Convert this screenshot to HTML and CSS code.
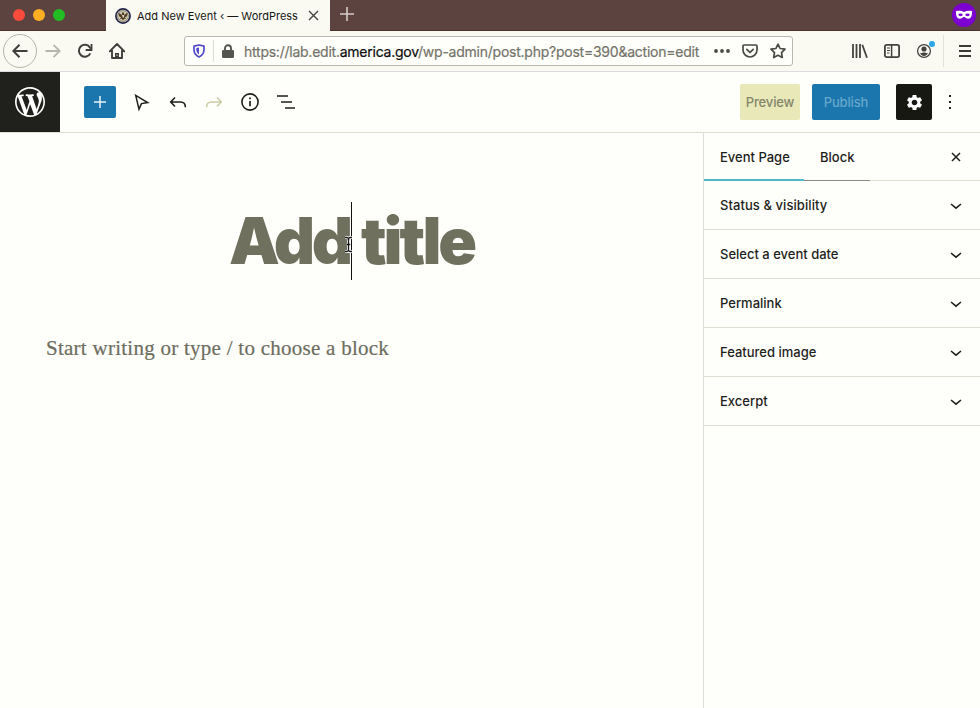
FILE: index.html
```html
<!DOCTYPE html>
<html lang="en">
<head>
<meta charset="utf-8">
<title>Add New Event ‹ — WordPress</title>
<link rel="stylesheet" href="styles.css">
</head>
<body>
<div class="tabbar">
  <div class="lights"><i class="red"></i><i class="amber"></i><i class="green"></i></div>
  <div class="tab">
    <svg width="16" height="16" viewBox="0 0 16 16"><circle cx="8" cy="8" r="7.1" fill="#e9e4cf" stroke="#23254a" stroke-width="1.7"/><circle cx="8" cy="8" r="5.4" fill="#d3cdb0" stroke="#55513f" stroke-width=".6"/><path d="M3.3 4.8 5.6 6l1.3 1.2V4.6h2.2v2.6L10.400 6l2.300-1.200-.8 3.400-2 1.300 1.300 1.700-2-.4L8 12.400 6.800 10.800l-2 .4 1.300-1.700-2-1.300z" fill="#4d3a26"/><path d="M6.900 7h2.200v2L8 10z" fill="#e4d6b4"/></svg>
    <span class="tab-title">Add New Event ‹ — WordPress</span>
    <svg class="tab-close" width="11" height="11" viewBox="0 0 11 11"><path d="M1 1l9 9M10 1l-9 9" stroke="#44443f" stroke-width="1.4"/></svg>
  </div>
  <svg class="tab-new" width="14" height="14" viewBox="0 0 14 14"><path d="M7 0v14M0 7h14" stroke="#d5ccc9" stroke-width="1.6"/></svg>
  <svg class="private" width="24" height="24" viewBox="0 0 24 24"><circle cx="12" cy="12" r="12" fill="#7c00d0"/><path d="M4 8.300c2.500-.9 5.600-.4 8 .7 2.400-1.100 5.500-1.600 8-.7.3 3.400-.6 7.400-3.700 7.400-2 0-2.800-1.800-4.300-1.800s-2.300 1.800-4.300 1.800C4.600 15.700 3.700 11.700 4 8.300z" fill="#fff"/><ellipse cx="8.500" cy="11.800" rx="2.200" ry="1.400" fill="#7c00d0"/><ellipse cx="15.500" cy="11.800" rx="2.200" ry="1.400" fill="#7c00d0"/></svg>
</div>

<div class="navbar">
  <div class="back"><svg width="16" height="14" viewBox="0 0 16 14"><path d="M15.500 7H1.500M7.500.8 1.300 7l6.200 6.200" fill="none" stroke="#3f3f3b" stroke-width="2"/></svg></div>
  <svg class="fwd" width="16" height="14" viewBox="0 0 16 14"><path d="M.5 7h14M8.500.8 14.700 7l-6.200 6.200" fill="none" stroke="#b5b5ac" stroke-width="1.8"/></svg>
  <svg class="reload" width="16" height="16" viewBox="0 0 16 16"><path d="M13.300 10.400A6 6 0 1 1 12.800 4.300L14 5.700" fill="none" stroke="#3f3f3b" stroke-width="2"/><path d="M14.500 1v6H8.700" fill="none" stroke="#3f3f3b" stroke-width="1.800"/></svg>
  <svg class="home" width="16" height="16" viewBox="0 0 16 16"><path d="M.7 8.300 8 1l7.300 7.300M3 7v8h10V7" fill="none" stroke="#3f3f3b" stroke-width="1.900" stroke-linejoin="round" stroke-linecap="round"/><path d="M6 15v-5h4v5z" fill="#3f3f3b"/><path d="M7.600 11.500h.8V13h-.8z" fill="#f9f9f7"/></svg>
  <div class="urlbar">
    <svg class="shield" width="12" height="14" viewBox="0 0 12 14"><path d="M6 1 11 2.200v3.600c0 3.200-1.900 5.800-5 7.200-3.100-1.400-5-4-5-7.200V2.200z" fill="none" stroke="#5148cc" stroke-width="1.700" stroke-linejoin="round"/><path d="M6 3.500v7C4.200 9.300 3.300 7.900 3.300 5.600V4.100z" fill="#5148cc"/></svg>
    <i class="url-sep"></i>
    <svg class="lock" width="12" height="14" viewBox="0 0 12 14"><path d="M3 6.500V4.200a3 3 0 0 1 6 0v2.300" fill="none" stroke="#55554f" stroke-width="1.900"/><rect y="6" width="12" height="8" rx="1.200" fill="#55554f"/></svg>
    <span class="url">https://lab.edit.<b>america.gov</b>/wp-admin/post.php?post=390&amp;action=edit</span>
    <svg class="dots" width="16" height="4" viewBox="0 0 16 4"><g fill="#4a4a45"><circle cx="2" cy="2" r="1.900"/><circle cx="8" cy="2" r="1.900"/><circle cx="14" cy="2" r="1.900"/></g></svg>
    <svg class="pocket" width="16" height="14" viewBox="0 0 16 14"><path d="M2 1h12a1 1 0 0 1 1 1v4a7 7 0 0 1-14 0V2a1 1 0 0 1 1-1z" fill="none" stroke="#4a4a45" stroke-width="1.700"/><path d="M4.800 5.300 8 8.400l3.200-3.100" fill="none" stroke="#4a4a45" stroke-width="1.700" stroke-linecap="round" stroke-linejoin="round"/></svg>
    <svg class="star" width="16" height="16" viewBox="0 0 16 16"><path d="M8 1.200l2.100 4.300 4.900.7-3.500 3.400.8 4.900L8 12.200l-4.300 2.300.8-4.900L1 6.200l4.900-.7z" fill="none" stroke="#4a4a45" stroke-width="1.700" stroke-linejoin="round"/></svg>
  </div>
  <svg class="library" width="16" height="14" viewBox="0 0 16 14"><path d="M1 0v14M4.500 0v14M8 0v14M10.300.7l4.700 13" stroke="#44443f" stroke-width="1.800" fill="none"/></svg>
  <svg class="side-ic" width="16" height="14" viewBox="0 0 16 14"><rect x=".9" y=".9" width="14.200" height="12.200" rx="1.800" fill="none" stroke="#44443f" stroke-width="1.800"/><path d="M7.600 1v12" stroke="#44443f" stroke-width="1.500"/><path d="M3 4h3M3 6.500h3M3 9h2.400" stroke="#44443f"/></svg>
  <svg class="account" width="20" height="20" viewBox="0 0 20 20"><circle cx="8" cy="11" r="6.400" fill="none" stroke="#44443f" stroke-width="1.300"/><circle cx="8" cy="9" r="2.600" fill="#44443f"/><path d="M3.900 12.800c1 .9 2.300-.2 4.100-.2s3.100 1.100 4.100.2c-.6 1.900-2.200 3.100-4.100 3.100s-3.500-1.200-4.100-3.100z" fill="#44443f"/><circle cx="16" cy="4" r="3" fill="#2ca5e6"/></svg>
  <i class="divider"></i>
  <svg class="menu" width="12" height="12" viewBox="0 0 12 12"><path d="M0 1h12M0 6h12M0 11h12" stroke="#3a3a36" stroke-width="1.800"/></svg>
</div>

<header class="editor-bar">
  <div class="wp"><svg width="36" height="36" viewBox="-2 -2 24 24"><path fill="#fff" d="M20 10c0-5.510-4.490-10-10-10C4.480 0 0 4.490 0 10c0 5.520 4.480 10 10 10 5.510 0 10-4.480 10-10zM7.780 15.370L4.370 6.220c.55-.02 1.170-.08 1.170-.08.5-.06.44-1.130-.06-1.110 0 0-1.450.11-2.370.11-.18 0-.37 0-.58-.01C4.120 2.690 6.870 1.110 10 1.110c2.330 0 4.450.87 6.050 2.340-.68-.11-1.650.39-1.650 1.580 0 .74.45 1.360.9 2.100.35.61.55 1.360.55 2.460 0 1.490-1.400 5-1.400 5l-3.030-8.370c.54-.02.82-.17.82-.17.5-.05.44-1.250-.06-1.220 0 0-1.440.12-2.380.12-.87 0-2.330-.12-2.330-.12-.5-.03-.56 1.200-.06 1.220l.92.08 1.260 3.410zM17.410 10c.24-.64.74-1.870.43-4.250.7 1.290 1.050 2.710 1.050 4.250 0 3.290-1.730 6.240-4.400 7.780.97-2.590 1.940-5.200 2.920-7.780zM6.100 18.090C3.120 16.650 1.110 13.530 1.110 10c0-1.300.23-2.480.72-3.590C3.250 10.300 4.670 14.200 6.100 18.090zm4.030-6.630l2.580 6.980c-.86.29-1.760.45-2.710.45-.79 0-1.570-.11-2.290-.33.81-2.380 1.620-4.740 2.420-7.100z"/></svg></div>
  <div class="tools">
    <div class="add"><svg width="12" height="12" viewBox="0 0 12 12"><path d="M6 0v12M0 6h12" stroke="#e9f3f8" stroke-width="1.500"/></svg></div>
    <svg width="24" height="24" viewBox="0 0 24 24"><path d="M5.700 5.300l12 7.200-6.200 1.100-2.500 5.500z" fill="none" stroke="#1e1e1c" stroke-width="1.500"/></svg>
    <svg width="24" height="24" viewBox="0 0 24 24"><path d="M9 7.500 4.700 12 9 16.500M5 12h9.500c3.200 0 4.900 1.700 4.900 5.200" fill="none" stroke="#1e1e1c" stroke-width="1.600"/></svg>
    <svg width="24" height="24" viewBox="0 0 24 24"><path d="M15 7.500l4.300 4.500-4.300 4.500M19 12H9.500c-3.200 0-4.900 1.700-4.900 5.200" fill="none" stroke="#cccca5" stroke-width="1.500"/></svg>
    <svg width="24" height="24" viewBox="0 0 24 24"><circle cx="12" cy="12" r="8.100" fill="none" stroke="#1e1e1c" stroke-width="1.600"/><path d="M12 11v5.200M12 7.600v1.700" stroke="#1e1e1c" stroke-width="1.700"/></svg>
    <svg width="24" height="24" viewBox="0 0 24 24"><path d="M3 6h11M7 12h11M11 18h10" stroke="#1e1e1c" stroke-width="1.500"/></svg>
  </div>
  <div class="actions">
    <div class="btn preview"><span>Preview</span></div>
    <div class="btn publish"><span>Publish</span></div>
    <div class="gear"><svg width="19" height="19" viewBox="0 0 24 24"><path fill="#fff" d="M19.140 12.940c.04-.3.06-.61.06-.94 0-.32-.02-.64-.07-.94l2.030-1.580c.18-.14.23-.41.12-.61l-1.920-3.320c-.12-.22-.37-.29-.59-.22l-2.390.96c-.5-.38-1.030-.7-1.620-.94L14.400 2.810c-.04-.24-.24-.41-.48-.41h-3.840c-.24 0-.43.17-.47.41L9.250 5.350C8.660 5.590 8.120 5.920 7.630 6.290L5.240 5.330c-.22-.08-.47 0-.59.22L2.740 8.870C2.620 9.080 2.660 9.340 2.860 9.480l2.030 1.580C4.840 11.360 4.800 11.690 4.800 12s.02.64.07.94l-2.030 1.580c-.18.14-.23.41-.12.61l1.920 3.320c.12.22.37.29.59.22l2.390-.96c.5.38 1.030.7 1.620.94l.36 2.540c.05.24.24.41.48.41h3.840c.24 0 .44-.17.47-.41l.36-2.540c.59-.24 1.130-.56 1.620-.94l2.390.96c.22.08.47 0 .59-.22l1.920-3.320c.12-.22.07-.47-.12-.61L19.140 12.940zM12 15.600c-1.980 0-3.600-1.620-3.600-3.600s1.620-3.600 3.600-3.600 3.600 1.620 3.600 3.600S13.980 15.600 12 15.600z"/></svg></div>
    <svg class="kebab" width="4" height="16" viewBox="0 0 4 16"><path d="M1 1h2v2H1zM1 7h2v2H1zM1 13h2v2H1z" fill="#1e1e1c"/></svg>
  </div>
</header>

<div class="workspace">
  <main class="canvas">
    <h1 class="title"><span class="word-add">Add</span><span class="word-title">title</span><i class="caret"></i>
      <svg class="ibeam" width="9" height="17" viewBox="0 0 9 17"><path d="M1 1.500h2l1.500 1 1.500-1h2M4.500 2.500v12M1 15.500h2l1.500-1 1.500 1h2M2.800 8.500h3.400" fill="none" stroke="#fff" stroke-width="3"/><path d="M1 1.500h2l1.500 1 1.500-1h2M4.500 2.500v12M1 15.500h2l1.500-1 1.500 1h2M2.800 8.500h3.400" fill="none" stroke="#111" stroke-width="1.300"/></svg>
    </h1>
    <p class="prompt">Start writing or type / to choose a block</p>
  </main>
  <aside class="sidebar">
    <div class="side-tabs">
      <div class="stab active"><span>Event Page</span></div>
      <div class="stab block"><span>Block</span></div>
      <svg class="x" width="10" height="10" viewBox="0 0 10 10"><path d="M1 1l8 8M9 1l-8 8" stroke="#1e1e1c" stroke-width="1.500"/></svg>
    </div>
    <div class="panel"><span class="p1">Status &amp; visibility</span><svg width="12" height="7" viewBox="0 0 12 7"><path d="M1 1l5 4.200L11 1" fill="none" stroke="#1e1e1c" stroke-width="1.600"/></svg></div>
    <div class="panel"><span>Select a event date</span><svg width="12" height="7" viewBox="0 0 12 7"><path d="M1 1l5 4.200L11 1" fill="none" stroke="#1e1e1c" stroke-width="1.600"/></svg></div>
    <div class="panel"><span>Permalink</span><svg width="12" height="7" viewBox="0 0 12 7"><path d="M1 1l5 4.200L11 1" fill="none" stroke="#1e1e1c" stroke-width="1.600"/></svg></div>
    <div class="panel"><span>Featured image</span><svg width="12" height="7" viewBox="0 0 12 7"><path d="M1 1l5 4.200L11 1" fill="none" stroke="#1e1e1c" stroke-width="1.600"/></svg></div>
    <div class="panel"><span>Excerpt</span><svg width="12" height="7" viewBox="0 0 12 7"><path d="M1 1l5 4.200L11 1" fill="none" stroke="#1e1e1c" stroke-width="1.600"/></svg></div>
  </aside>
</div>
</body>
</html>
```
FILE: styles.css
```css
* { box-sizing: border-box; }
body { margin: 0; width: 980px; height: 708px; overflow: hidden; display: flex; flex-direction: column; background: #fefefa; color: #1e1e1c; font-family: Inter, "Liberation Sans", sans-serif; }
svg { display: block; flex: none; }
span { white-space: nowrap; }

.tabbar { height: 31px; flex: none; display: flex; align-items: center; background: #5d4340; border-bottom: 1px solid #4a302a; }
.lights { width: 106px; padding-left: 13px; display: flex; gap: 8px; }
.lights i { width: 12px; height: 12px; border-radius: 50%; }
.red { background: #fb4b3c; }
.amber { background: #fdaf24; }
.green { background: #22bd22; }
.tab { width: 224px; height: 31px; align-self: flex-start; padding-left: 9px; display: flex; align-items: center; background: #fafaf3; }
.tab-title { width: 161px; margin-left: 6px; font-size: 11px; letter-spacing: 0; color: #161614; }
.tab-close { margin-left: 10px; }
.tab-new { margin-left: 10px; margin-top: -2px; }
.private { margin-left: auto; margin-right: 4px; }

.navbar { height: 41px; flex: none; display: flex; align-items: center; background: #fafaf3; border-bottom: 1px solid #dcdce0; }
.back { width: 34px; height: 34px; margin-left: 3px; border: 1px solid #b5b5a8; border-radius: 50%; display: flex; align-items: center; justify-content: center; }
.fwd { margin-left: 8px; }
.reload { margin-left: 16px; }
.home { margin-left: 16px; }
.urlbar { width: 609px; height: 30px; margin-left: 59px; display: flex; align-items: center; border: 1px solid #b8b8ac; border-radius: 3px; background: #fefefa; }
.shield { margin-left: 8px; }
.url-sep { width: 1px; height: 22px; margin-left: 8px; background: #deded6; }
.lock { margin-left: 8px; }
.url { width: 458px; margin-left: 10px; font-size: 14px; letter-spacing: -0.24px; color: #74746a; -webkit-text-stroke: 0.2px #74746a; }
.url b { font-weight: 400; color: #0c0c0d; -webkit-text-stroke: 0.2px #0c0c0d; }
.dots { margin-left: 12px; }
.pocket { margin-left: 12px; }
.star { margin-left: 12px; }
.library { margin-left: 59px; }
.side-ic { margin-left: 16px; }
.account { margin-left: 16px; margin-top: -3px; }
.divider { width: 1px; height: 32px; margin-left: 7px; background: #e1e1da; }
.menu { margin-left: 15px; }

.editor-bar { height: 61px; flex: none; display: flex; align-items: center; border-bottom: 1px solid #deded0; }
.wp { width: 60px; height: 60px; display: flex; align-items: center; justify-content: center; background: #20211c; }
.tools { display: flex; align-items: center; gap: 12px; margin-left: 24px; }
.add { width: 32px; height: 32px; margin-right: 2px; border-radius: 2px; background: #1b76ae; display: flex; align-items: center; justify-content: center; }
.actions { margin-left: auto; display: flex; align-items: center; padding-right: 28px; }
.btn { height: 36px; display: flex; align-items: center; justify-content: center; font-size: 13px; font-weight: 500; border-radius: 2px; }
.btn span { letter-spacing: -0.15px; }
.preview { width: 60px; background: #e8e8b8; color: #85856a; margin-right: 12px; }
.publish { width: 68px; background: #1b76ae; color: #65a7ca; margin-right: 16px; }
.gear { width: 36px; height: 36px; border-radius: 2px; background: #181812; display: flex; align-items: center; justify-content: center; margin-right: 16px; }

.workspace { flex: 1; display: flex; min-height: 0; }
.canvas { width: 703px; padding-top: 69px; }
.title { position: relative; margin: 0 0 0 229px; width: 250px; height: 77px; line-height: 77px; display: flex; font-size: 64px; font-weight: 900; color: #70705f; }
.word-add { width: 132px; letter-spacing: -3.4px; }
.word-title { letter-spacing: -3px; }
.caret { position: absolute; left: 122px; top: 0; width: 1px; height: 78px; background: #111; }
.ibeam { position: absolute; left: 115px; top: 34px; }
.prompt { margin: 54px 0 0 46px; font-family: "Liberation Serif", serif; font-size: 21px; line-height: 30px; letter-spacing: 0.26px; color: #6d6d60; white-space: nowrap; -webkit-text-stroke: 0.2px #6d6d60; }
.sidebar { width: 277px; border-left: 1px solid #deded8; font-size: 13px; font-weight: 500; }
.side-tabs { height: 48px; display: flex; align-items: center; border-bottom: 1px solid #deded0; }
.stab { height: 48px; padding: 0 16px; display: flex; align-items: center; }
.active { width: 100px; border-bottom: 2px solid #4fb9c6; padding-top: 3px; }
.block { width: 66px; border-bottom: 1px solid #8b8b86; padding-top: 2px; }
.x { margin-left: auto; margin-right: 19px; }
.panel { height: 49px; padding: 0 18px 0 16px; display: flex; align-items: center; justify-content: space-between; border-bottom: 1px solid #deded4; }
.panel svg { margin-top: 3px; }
.p1 { letter-spacing: 0.07px; }
```
